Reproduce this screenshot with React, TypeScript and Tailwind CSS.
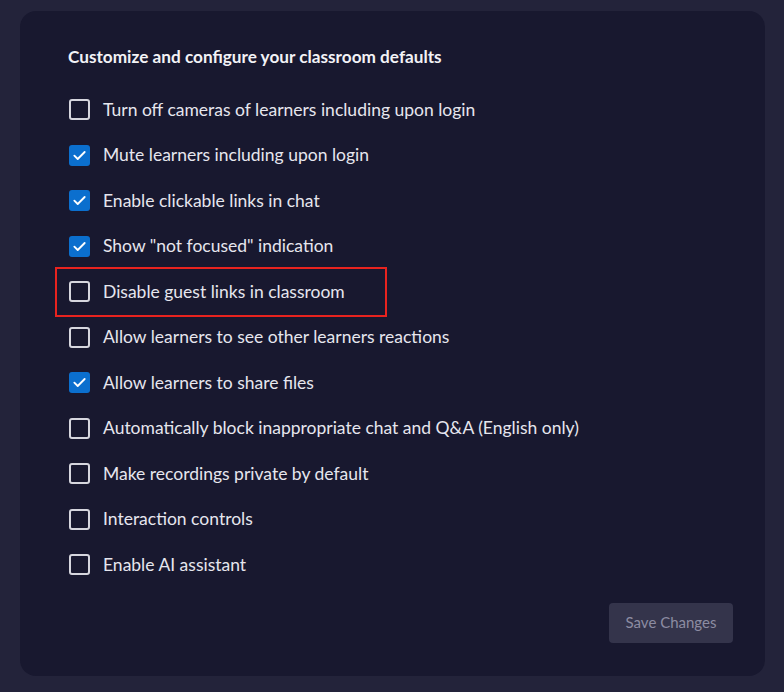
import React, { useState } from "react";

type Option = {
  id: string;
  label: string;
  checked: boolean;
  highlight?: boolean;
};

const initialOptions: Option[] = [
  { id: "cameras", label: "Turn off cameras of learners including upon login", checked: false },
  { id: "mute", label: "Mute learners including upon login", checked: true },
  { id: "links", label: "Enable clickable links in chat", checked: true },
  { id: "focus", label: 'Show "not focused" indication', checked: true },
  { id: "guest", label: "Disable guest links in classroom", checked: false, highlight: true },
  { id: "reactions", label: "Allow learners to see other learners reactions", checked: false },
  { id: "files", label: "Allow learners to share files", checked: true },
  { id: "block", label: "Automatically block inappropriate chat and Q&A (English only)", checked: false },
  { id: "recordings", label: "Make recordings private by default", checked: false },
  { id: "interaction", label: "Interaction controls", checked: false },
  { id: "ai", label: "Enable AI assistant", checked: false },
];

const Checkbox: React.FC<{ checked: boolean; onChange: () => void }> = ({ checked, onChange }) => (
  <button
    type="button"
    onClick={onChange}
    className={
      checked
        ? "w-[21px] h-[21px] rounded-[3px] bg-[#0b6fce] flex items-center justify-center shrink-0"
        : "w-[21px] h-[21px] rounded-[3px] border-2 border-[#d6d6de] shrink-0"
    }
  >
    {checked && (
      <svg width="15" height="15" viewBox="0 0 16 16" fill="none">
        <path d="M2.5 8.2l3.6 3.5L13.5 4.3" stroke="#ffffff" strokeWidth="2" strokeLinecap="round" strokeLinejoin="round" />
      </svg>
    )}
  </button>
);

const App: React.FC = () => {
  const [options, setOptions] = useState<Option[]>(initialOptions);

  const toggle = (id: string) => {
    setOptions((prev) => prev.map((o) => (o.id === id ? { ...o, checked: !o.checked } : o)));
  };

  return (
    <div className="w-[784px] h-[692px] bg-[#23233a] pt-[11px] pl-[20px] font-['Lato','Noto_Sans',sans-serif]">
      <div className="w-[745px] h-[665px] bg-[#18182f] rounded-[16px] pl-[48px] pr-[32px] pt-[34px] flex flex-col">
        <h2 className="text-[17.2px] leading-[24px] font-bold text-[#f2f2f6]">
          Customize and configure your classroom defaults
        </h2>

        <div className="mt-[18px] flex flex-col">
          {options.map((o) => (
            <div key={o.id} className="relative h-[45.5px] flex items-center gap-[13px] pl-[1px]">
              <Checkbox checked={o.checked} onChange={() => toggle(o.id)} />
              <span className="text-[17.5px] text-[#e6e6ee]">{o.label}</span>
              {o.highlight && (
                <div className="absolute left-[-13px] top-[-2px] w-[332px] h-[50px] border-2 border-[#e8231f] pointer-events-none" />
              )}
            </div>
          ))}
        </div>

        <div className="flex justify-end mt-[15px]">
          <button
            type="button"
            className="w-[124px] h-[40px] rounded-[4px] bg-[#34344b] text-[15px] text-[#8c8ca2]"
          >
            Save Changes
          </button>
        </div>
      </div>
    </div>
  );
};

export default App;
